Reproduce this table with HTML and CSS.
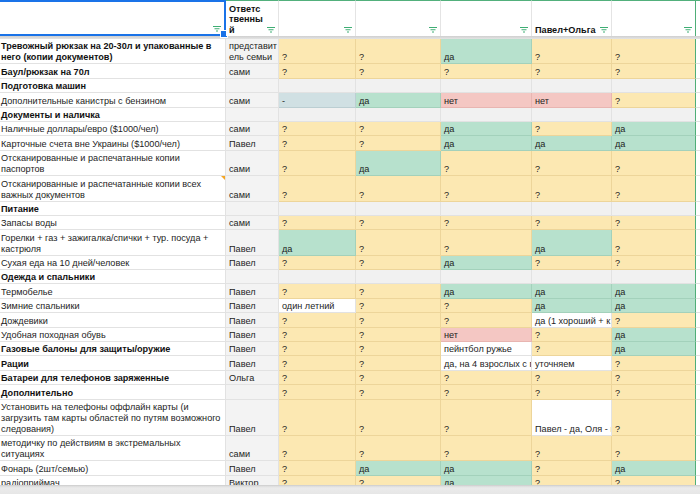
FILE: index.html
```html
<!DOCTYPE html>
<html lang="ru">
<head>
<meta charset="utf-8">
<title>Таблица</title>
<link rel="stylesheet" href="styles.css">
</head>
<body>
<div class="sheet">
  <div class="grid">
    <div class="row head">
      <div class="hc ha"><span></span><svg class="flt" viewBox="0 0 8 6"><path d="M0 .5H8M1.5 2.75H6.5M3 5H5"/></svg></div>
      <div class="hc"><span>Ответс<br>твенны<br>й</span><svg class="flt" viewBox="0 0 8 6"><path d="M0 .5H8M1.5 2.75H6.5M3 5H5"/></svg></div>
      <div class="hc"><span></span><svg class="flt" viewBox="0 0 8 6"><path d="M0 .5H8M1.5 2.75H6.5M3 5H5"/></svg></div>
      <div class="hc"><span></span><svg class="flt" viewBox="0 0 8 6"><path d="M0 .5H8M1.5 2.75H6.5M3 5H5"/></svg></div>
      <div class="hc"><span></span><svg class="flt" viewBox="0 0 8 6"><path d="M0 .5H8M1.5 2.75H6.5M3 5H5"/></svg></div>
      <div class="hc"><span>Павел+Ольга</span><svg class="flt" viewBox="0 0 8 6"><path d="M0 .5H8M1.5 2.75H6.5M3 5H5"/></svg></div>
      <div class="hc hg"><span></span><svg class="flt" viewBox="0 0 8 6"><path d="M0 .5H8M1.5 2.75H6.5M3 5H5"/></svg></div>
      <div class="hc hh"></div>
    </div>
    <div class="freeze"></div>

    <div class="row s2">
      <div class="c a b"><span>Тревожный рюкзак на 20-30л и упакованные в<br>него (копии документов)</span></div>
      <div class="c p"><span>представит<br>ель семьи</span></div>
      <div class="c y">?</div><div class="c y">?</div><div class="c gr">да</div><div class="c y">?</div><div class="c y g">?</div><div class="c h"></div>
    </div>
    <div class="row s1">
      <div class="c a b">Баул/рюкзак на 70л</div><div class="c p">сами</div>
      <div class="c y">?</div><div class="c y">?</div><div class="c y">?</div><div class="c y">?</div><div class="c y g">?</div><div class="c h"></div>
    </div>
    <div class="row s1">
      <div class="c a b">Подготовка машин</div><div class="c p"></div>
      <div class="c sec"></div><div class="c sec"></div><div class="c sec"></div><div class="c sec"></div><div class="c sec g"></div><div class="c h"></div>
    </div>
    <div class="row s1">
      <div class="c a">Дополнительные канистры с бензином</div><div class="c p">сами</div>
      <div class="c cy">-</div><div class="c gr">да</div><div class="c rd">нет</div><div class="c rd">нет</div><div class="c y g">?</div><div class="c h"></div>
    </div>
    <div class="row s1">
      <div class="c a b">Документы и наличка</div><div class="c p"></div>
      <div class="c sec"></div><div class="c sec"></div><div class="c sec"></div><div class="c sec"></div><div class="c sec g"></div><div class="c h"></div>
    </div>
    <div class="row s1">
      <div class="c a">Наличные доллары/евро ($1000/чел)</div><div class="c p">сами</div>
      <div class="c y">?</div><div class="c y">?</div><div class="c gr">да</div><div class="c y">?</div><div class="c gr g">да</div><div class="c h"></div>
    </div>
    <div class="row s1">
      <div class="c a">Карточные счета вне Украины ($1000/чел)</div><div class="c p">Павел</div>
      <div class="c y">?</div><div class="c y">?</div><div class="c gr">да</div><div class="c gr">да</div><div class="c gr g">да</div><div class="c h"></div>
    </div>
    <div class="row s2">
      <div class="c a"><span>Отсканированные и распечатанные копии<br>паспортов</span></div><div class="c p">сами</div>
      <div class="c y">?</div><div class="c gr">да</div><div class="c y">?</div><div class="c y">?</div><div class="c y g">?</div><div class="c h"></div>
    </div>
    <div class="row s2">
      <div class="c a note"><span>Отсканированные и распечатанные копии всех<br>важных документов</span></div><div class="c p">сами</div>
      <div class="c y">?</div><div class="c y">?</div><div class="c y">?</div><div class="c y">?</div><div class="c y g">?</div><div class="c h"></div>
    </div>
    <div class="row s1">
      <div class="c a b">Питание</div><div class="c p"></div>
      <div class="c sec"></div><div class="c sec"></div><div class="c sec"></div><div class="c sec"></div><div class="c sec g"></div><div class="c h"></div>
    </div>
    <div class="row s1">
      <div class="c a">Запасы воды</div><div class="c p">сами</div>
      <div class="c y">?</div><div class="c y">?</div><div class="c y">?</div><div class="c y">?</div><div class="c y g">?</div><div class="c h"></div>
    </div>
    <div class="row s2">
      <div class="c a"><span>Горелки + газ + зажигалка/спички + тур. посуда +<br>кастрюля</span></div><div class="c p">Павел</div>
      <div class="c gr">да</div><div class="c y">?</div><div class="c y">?</div><div class="c gr">да</div><div class="c y g">?</div><div class="c h"></div>
    </div>
    <div class="row s1">
      <div class="c a">Сухая еда на 10 дней/человек</div><div class="c p">Павел</div>
      <div class="c y">?</div><div class="c y">?</div><div class="c gr">да</div><div class="c y">?</div><div class="c y g">?</div><div class="c h"></div>
    </div>
    <div class="row s1">
      <div class="c a b">Одежда и спальники</div><div class="c p"></div>
      <div class="c sec"></div><div class="c sec"></div><div class="c sec"></div><div class="c sec"></div><div class="c sec g"></div><div class="c h"></div>
    </div>
    <div class="row s1">
      <div class="c a">Термобелье</div><div class="c p">Павел</div>
      <div class="c y">?</div><div class="c y">?</div><div class="c gr">да</div><div class="c gr">да</div><div class="c gr g">да</div><div class="c h"></div>
    </div>
    <div class="row s1">
      <div class="c a">Зимние спальники</div><div class="c p">Павел</div>
      <div class="c w">один летний</div><div class="c y">?</div><div class="c y">?</div><div class="c gr">да</div><div class="c gr g">да</div><div class="c h"></div>
    </div>
    <div class="row s1">
      <div class="c a">Дождевики</div><div class="c p">Павел</div>
      <div class="c y">?</div><div class="c y">?</div><div class="c y">?</div><div class="c w">да (1 хороший + к</div><div class="c y g">?</div><div class="c h"></div>
    </div>
    <div class="row s1">
      <div class="c a">Удобная походная обувь</div><div class="c p">Павел</div>
      <div class="c y">?</div><div class="c y">?</div><div class="c rd">нет</div><div class="c y">?</div><div class="c gr g">да</div><div class="c h"></div>
    </div>
    <div class="row s1">
      <div class="c a b">Газовые балоны для защиты/оружие</div><div class="c p">Павел</div>
      <div class="c y">?</div><div class="c y">?</div><div class="c w">пейнтбол ружье</div><div class="c y">?</div><div class="c gr g">да</div><div class="c h"></div>
    </div>
    <div class="row s1">
      <div class="c a b">Рации</div><div class="c p">Павел</div>
      <div class="c y">?</div><div class="c y">?</div><div class="c w">да, на 4 взрослых с г</div><div class="c w">уточняем</div><div class="c y g">?</div><div class="c h"></div>
    </div>
    <div class="row s1">
      <div class="c a b">Батареи для телефонов заряженные</div><div class="c p">Ольга</div>
      <div class="c y">?</div><div class="c y">?</div><div class="c y">?</div><div class="c y">?</div><div class="c y g">?</div><div class="c h"></div>
    </div>
    <div class="row s1">
      <div class="c a b">Дополнительно</div><div class="c p"></div>
      <div class="c y">?</div><div class="c y">?</div><div class="c y">?</div><div class="c y">?</div><div class="c y g">?</div><div class="c h"></div>
    </div>
    <div class="row s3">
      <div class="c a"><span>Установить на телефоны оффлайн карты (и<br>загрузить там карты областей по путям возможного<br>следования)</span></div><div class="c p">Павел</div>
      <div class="c y">?</div><div class="c y">?</div><div class="c y">?</div><div class="c w">Павел - да, Оля - н</div><div class="c y g">?</div><div class="c h"></div>
    </div>
    <div class="row s2">
      <div class="c a"><span>методичку по действиям в экстремальных<br>ситуациях</span></div><div class="c p">сами</div>
      <div class="c y">?</div><div class="c y">?</div><div class="c y">?</div><div class="c y">?</div><div class="c y g">?</div><div class="c h"></div>
    </div>
    <div class="row s1">
      <div class="c a">Фонарь (2шт/семью)</div><div class="c p">Павел</div>
      <div class="c y">?</div><div class="c gr">да</div><div class="c gr">да</div><div class="c y">?</div><div class="c gr g">да</div><div class="c h"></div>
    </div>
    <div class="row s1">
      <div class="c a">радіоприймач</div><div class="c p">Виктор</div>
      <div class="c y">?</div><div class="c y">?</div><div class="c gr">да</div><div class="c y">?</div><div class="c y g">?</div><div class="c h"></div>
    </div>
  </div>
  <div class="hscroll"></div>
</div>
</body>
</html>
```

FILE: styles.css
```css
* { box-sizing: border-box; margin: 0; padding: 0; }
html, body { width: 700px; height: 494px; overflow: hidden; background: #fff; }
body {
  font-family: "Liberation Sans", Arial, Helvetica, sans-serif;
  font-size: 9.15px;
  color: #1d1d1d;
}
.sheet { width: 700px; height: 494px; display: flex; flex-direction: column; }
.grid { height: 485px; overflow: hidden; flex: none; }
.row {
  display: grid;
  grid-template-columns: 226px 53px 77px 85px 91px 80px 84px 4px;
}
.s1 { height: 14.4px; }
.s2 { height: 25.4px; }
.s3 { height: 36.4px; }

/* header */
.head { height: 36px; position: relative; z-index: 3; }
.hc {
  display: flex;
  align-items: flex-end;
  justify-content: space-between;
  padding: 0 3px 3px 3px;
  border-top: 1px solid #52b07c;
  border-right: 1px solid #e4e4e4;
  background: #fff;
  font-weight: bold;
  line-height: 10.5px;
  white-space: nowrap;
  position: relative;
  color: #111;
}
.hc span { margin-bottom: -2px; }
.ha { border: 2px solid #1a73e8; border-left: none; padding-bottom: 2px; padding-right: 3px; }
.ha::after {
  content: "";
  position: absolute;
  right: -4px;
  bottom: -4px;
  width: 6px;
  height: 6px;
  background: #1a73e8;
  border: 1px solid #fff;
}
.hg { border-right: 1px solid #4fae78; }
.hh { border-right: none; }
.flt {
  width: 8px;
  height: 6px;
  flex: none;
  fill: none;
  stroke: #3fae74;
  stroke-width: 1.1;
}
.freeze {
  height: 3px;
  background: linear-gradient(#cfcfcf, #e4e4e4);
}

/* cells */
.c {
  display: flex;
  align-items: flex-end;
  padding: 0 2px 0 3px;
  line-height: 11px;
  white-space: nowrap;
  overflow: hidden;
  border-right: 1px solid #e2e2e2;
  border-bottom: 1px solid #e2e2e2;
  background: #fff;
}
.a { padding-left: 1px; }
.b { font-weight: bold; color: #111; }
.p { background: #f3f3f3; }
.sec { background: #f1f1f1; }
.y { background: #fce8b2; border-color: rgba(160, 120, 30, 0.16); }
.gr { background: #b7e1cd; border-color: rgba(40, 110, 80, 0.14); }
.rd { background: #f4c7c3; border-color: rgba(150, 60, 50, 0.12); }
.cy { background: #d0e0e3; border-color: rgba(40, 80, 90, 0.12); }
.w { background: #fff; }
.g { border-right: 1px solid #4fae78; }
.h { border-right: none; background: #fff; }
.note { position: relative; }
.note::after {
  content: "";
  position: absolute;
  top: 0;
  right: 0;
  border-top: 4px solid #f5a623;
  border-left: 4px solid transparent;
}
.hscroll {
  height: 9px;
  flex: none;
  background: linear-gradient(#dcdcdc, #ebebeb 2px, #e6e6e6);
  border-top: 1px solid #d2d2d2;
}
```
